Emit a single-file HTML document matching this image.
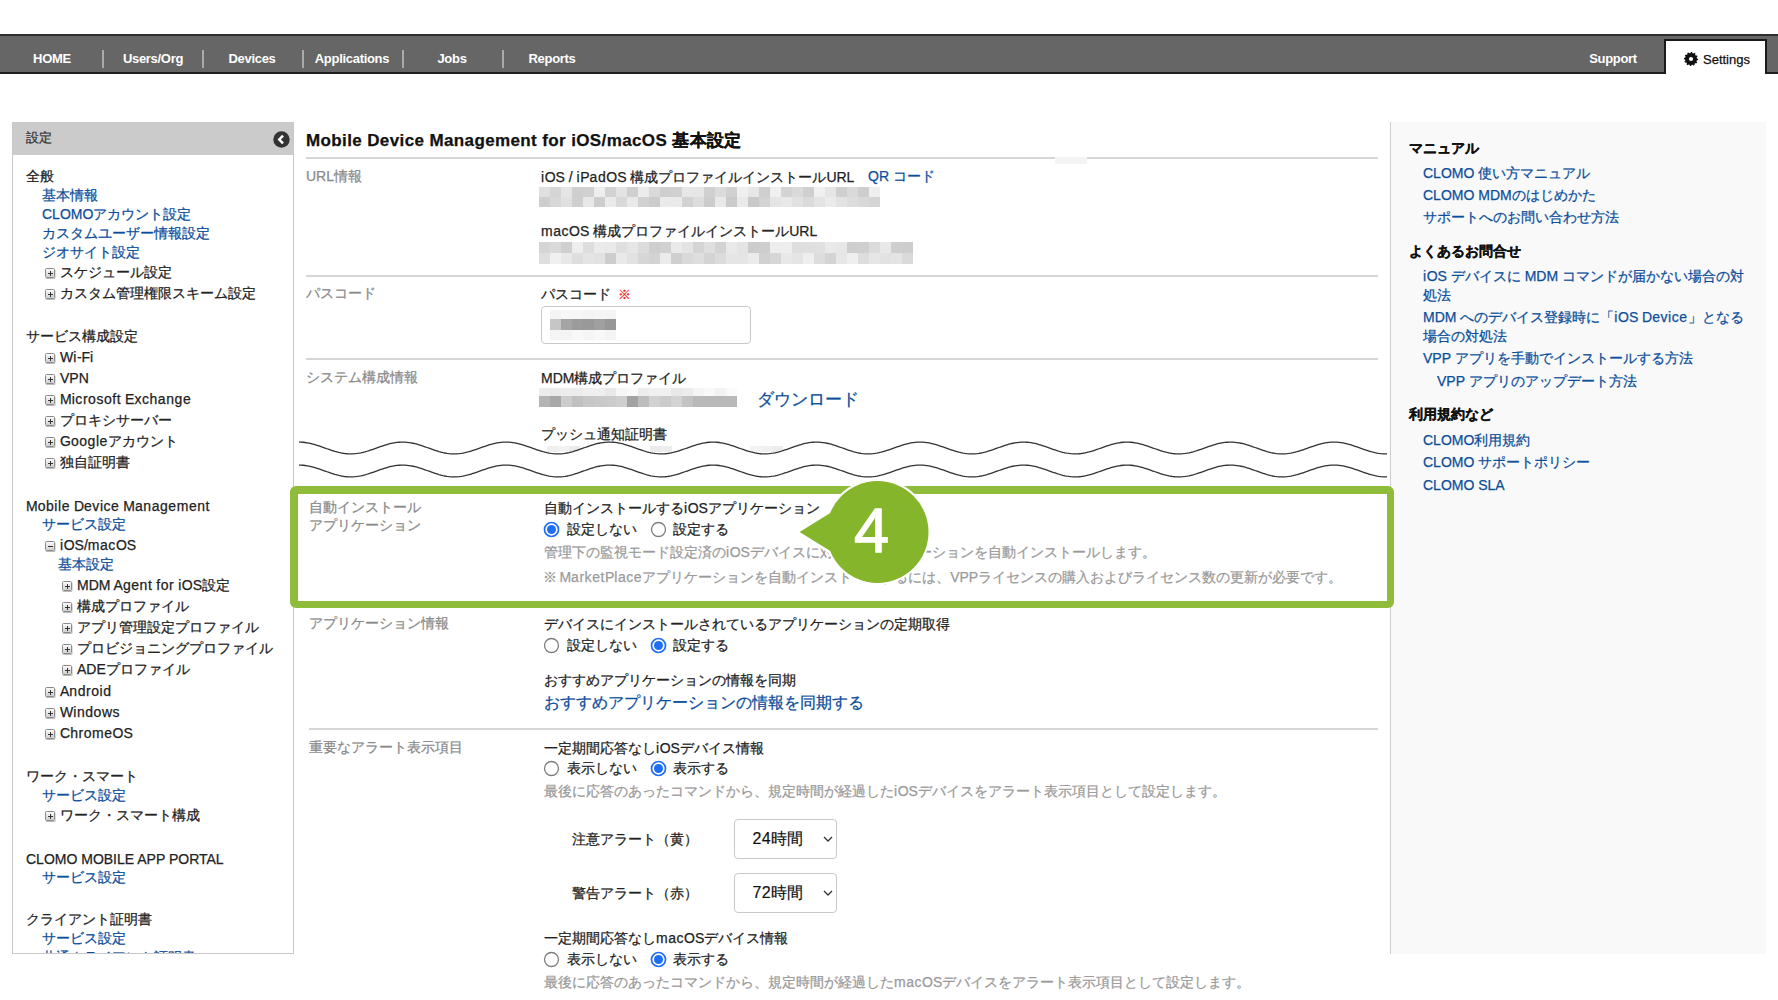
<!DOCTYPE html>
<html lang="ja"><head><meta charset="utf-8"><style>
*{margin:0;padding:0;box-sizing:border-box}
html,body{width:1778px;height:1000px;overflow:hidden;background:#fff}
body{position:relative;font-family:"Liberation Sans",sans-serif;font-size:14px;color:#222}
.t{position:absolute;white-space:nowrap;line-height:20px;height:20px;-webkit-text-stroke:0.25px currentColor}
.lk{color:#0b4e9b}
.lo{letter-spacing:0.55px}
.lb{color:#8a8a8a}
.gr{color:#9a9a9a}
.big{font-size:16.5px}
.bd{font-weight:bold;color:#111}
.ttl{font-size:17px;font-weight:bold;color:#111;letter-spacing:0.38px}
.req{color:#e8281e;font-size:13px;margin-left:3px}
.pl{display:inline-block;width:10px;height:10px;border:1px solid #8a8a8a;border-radius:1.5px;background:linear-gradient(#fafafa,#d0d0d0);box-shadow:0.5px 1px 0 #bbb;position:relative;margin-right:5px;vertical-align:-1px}
.pl:before{content:"";position:absolute;left:1.5px;top:3.5px;width:5px;height:1.2px;background:#333}
.pl:after{content:"";position:absolute;left:3.5px;top:1.5px;width:1.2px;height:5px;background:#333}
.pl.mi:after{display:none}
.nav{position:absolute;left:0;top:34px;width:1778px;height:40px;background:#666;border-top:2px solid #2e2e2e;border-bottom:2px solid #1e1e1e}
.nv{position:absolute;top:14.5px;width:100px;text-align:center;color:#fff;font-size:13px;font-weight:bold;line-height:16px;letter-spacing:-0.3px}
.sep{position:absolute;top:14px;width:2px;height:18px;background:#aaa}
.stab{position:absolute;left:1664px;top:39px;width:103px;height:35px;background:#fff;border:2px solid #1a1a1a;border-bottom:none}
.side{position:absolute;left:12px;top:122px;width:282px;height:832px;border:1px solid #c8c8c8;border-top:none;overflow:hidden;background:#fff}
.shd{position:absolute;left:0;top:0;width:100%;height:33px;background:#cbcbcb}
.sidein{position:absolute;left:-12px;top:-122px;width:1778px;height:1000px}
.rd{position:absolute}
.rd.on{border:1.8px solid #1f6ff5;background:#fff}
.rd.on:after{content:"";position:absolute;left:1.6px;top:1.6px;width:8.2px;height:8.2px;border-radius:50%;background:#1f6ff5}
.rl{position:absolute}
.bl{position:absolute;overflow:hidden}
.bl i{position:absolute}
.inp{position:absolute;border:1px solid #c9c9c9;border-radius:4px;background:#fff}
.sel{position:absolute;border:1px solid #c9c9c9;border-radius:4px;background:#fff}
.sel span{position:absolute;left:17.5px;top:10px;font-size:16px;line-height:18px;color:#111;letter-spacing:0.3px;-webkit-text-stroke:0.2px #111}
.rpan{position:absolute;left:1390px;top:122px;width:376px;height:832px;background:#f9f9f9;border-left:1px solid #cfcfcf}
.gbox{position:absolute;left:290px;top:486px;width:1104px;height:122px;border:solid #90bc3c;border-width:8px 7px 7px 8px;border-radius:6px}
</style></head><body>
<div class="nav"><div class="nv" style="left:2px">HOME</div><div class="nv" style="left:103px">Users/Org</div><div class="nv" style="left:202px">Devices</div><div class="nv" style="left:302px">Applications</div><div class="nv" style="left:402px">Jobs</div><div class="nv" style="left:502px">Reports</div><div class="sep" style="left:102px"></div><div class="sep" style="left:202px"></div><div class="sep" style="left:302px"></div><div class="sep" style="left:402px"></div><div class="sep" style="left:502px"></div><div class="nv" style="left:1563px">Support</div></div>
<div class="stab"></div>
<div style="position:absolute;left:1666px;top:72px;width:99px;height:3px;background:#fff"></div>
<svg style="position:absolute;left:1683px;top:51px" width="16" height="16" viewBox="0 0 16 16"><polygon points="15.10,8.00 15.04,8.93 13.70,9.53 13.45,10.26 14.15,11.55 13.63,12.32 12.17,12.17 11.59,12.68 11.55,14.15 10.72,14.56 9.53,13.70 8.77,13.85 8.00,15.10 7.07,15.04 6.47,13.70 5.74,13.45 4.45,14.15 3.68,13.63 3.83,12.17 3.32,11.59 1.85,11.55 1.44,10.72 2.30,9.53 2.15,8.77 0.90,8.00 0.96,7.07 2.30,6.47 2.55,5.74 1.85,4.45 2.37,3.68 3.83,3.83 4.41,3.32 4.45,1.85 5.28,1.44 6.47,2.30 7.23,2.15 8.00,0.90 8.93,0.96 9.53,2.30 10.26,2.55 11.55,1.85 12.32,2.37 12.17,3.83 12.68,4.41 14.15,4.45 14.56,5.28 13.70,6.47 13.85,7.23" fill="#111"/><circle cx="8" cy="8" r="2.1" fill="#fff"/></svg>
<div class="t" style="left:1703px;top:49.5px;font-size:13px;color:#111">Settings</div>
<div class="side"><div class="shd"></div><div class="sidein">
<div class="t" style="left:25px;top:128px;font-size:13px;color:#333">設定</div>
<svg style="position:absolute;left:272px;top:131px" width="17" height="17" viewBox="0 0 17 17"><circle cx="8.5" cy="8.5" r="8.2" fill="#333"/><path d="M10 4.6 L6.3 8.5 L10 12.4" fill="none" stroke="#fff" stroke-width="2.5"/></svg>
<div class="t " style="left:25px;top:166px">全般</div><div class="t lk" style="left:41px;top:185px">基本情報</div><div class="t lk" style="left:41px;top:204px">CLOMOアカウント設定</div><div class="t lk" style="left:41px;top:223px">カスタムユーザー情報設定</div><div class="t lk" style="left:41px;top:242px">ジオサイト設定</div><div class="t " style="left:44px;top:262px"><span class="pl"></span>スケジュール設定</div><div class="t " style="left:44px;top:283px"><span class="pl"></span>カスタム管理権限スキーム設定</div><div class="t " style="left:25px;top:326px">サービス構成設定</div><div class="t " style="left:44px;top:347px"><span class="pl"></span>W<span class="lo">i</span>-F<span class="lo">i</span></div><div class="t " style="left:44px;top:368px"><span class="pl"></span>VPN</div><div class="t " style="left:44px;top:389px"><span class="pl"></span>M<span class="lo">icrosoft</span> E<span class="lo">xchange</span></div><div class="t " style="left:44px;top:410px"><span class="pl"></span>プロキシサーバー</div><div class="t " style="left:44px;top:431px"><span class="pl"></span>G<span class="lo">oogle</span>アカウント</div><div class="t " style="left:44px;top:452px"><span class="pl"></span>独自証明書</div><div class="t " style="left:25px;top:496px">M<span class="lo">obile</span> D<span class="lo">evice</span> M<span class="lo">anagement</span></div><div class="t lk" style="left:41px;top:514px">サービス設定</div><div class="t " style="left:44px;top:535px"><span class="pl mi"></span><span class="lo">i</span>OS/<span class="lo">mac</span>OS</div><div class="t lk" style="left:57px;top:554px">基本設定</div><div class="t " style="left:61px;top:575px"><span class="pl"></span>MDM A<span class="lo">gent</span> <span class="lo">for</span> <span class="lo">i</span>OS設定</div><div class="t " style="left:61px;top:596px"><span class="pl"></span>構成プロファイル</div><div class="t " style="left:61px;top:617px"><span class="pl"></span>アプリ管理設定プロファイル</div><div class="t " style="left:61px;top:638px"><span class="pl"></span>プロビジョニングプロファイル</div><div class="t " style="left:61px;top:659px"><span class="pl"></span>ADEプロファイル</div><div class="t " style="left:44px;top:681px"><span class="pl"></span>A<span class="lo">ndroid</span></div><div class="t " style="left:44px;top:702px"><span class="pl"></span>W<span class="lo">indows</span></div><div class="t " style="left:44px;top:723px"><span class="pl"></span>C<span class="lo">hrome</span>OS</div><div class="t " style="left:25px;top:766px">ワーク・スマート</div><div class="t lk" style="left:41px;top:785px">サービス設定</div><div class="t " style="left:44px;top:805px"><span class="pl"></span>ワーク・スマート構成</div><div class="t " style="left:25px;top:849px">CLOMO MOBILE APP PORTAL</div><div class="t lk" style="left:41px;top:867px">サービス設定</div><div class="t " style="left:25px;top:909px">クライアント証明書</div><div class="t lk" style="left:41px;top:928px">サービス設定</div><div class="t lk" style="left:41px;top:947px">共通クライアント証明書</div>
</div></div>
<div class="rl" style="left:293px;top:122px;width:1px;height:832px;background:#c8c8c8"></div>
<div class="t ttl" style="left:306px;top:130.5px;">Mobile Device Management for iOS/macOS 基本設定</div><div class="t lb" style="left:306px;top:166px;">URL情報</div><div class="t " style="left:541px;top:167px;"><span class="lo">i</span>OS / <span class="lo">i</span>P<span class="lo">ad</span>OS 構成プロファイルインストールURL</div><div class="t lk" style="left:868px;top:166px;">QR コード</div><div class="t " style="left:541px;top:221px;"><span class="lo">mac</span>OS 構成プロファイルインストールURL</div><div class="t lb" style="left:306px;top:283px;">パスコード</div><div class="t " style="left:541px;top:284px;">パスコード <span class="req">※</span></div><div class="t lb" style="left:306px;top:367px;">システム構成情報</div><div class="t " style="left:541px;top:368px;">MDM構成プロファイル</div><div class="t lk big" style="left:757px;top:389px;">ダウンロード</div><div class="t " style="left:541px;top:424px;">プッシュ通知証明書</div><div class="t lb" style="left:309px;top:497px;">自動インストール</div><div class="t lb" style="left:309px;top:515px;">アプリケーション</div><div class="t " style="left:544px;top:498px;">自動インストールする<span class="lo">i</span>OSアプリケーション</div><div class="t " style="left:567px;top:519px;">設定しない</div><div class="t " style="left:673px;top:519px;">設定する</div><div class="t gr" style="left:544px;top:542px;">管理下の監視モード設定済の<span class="lo">i</span>OSデバイスに対し、アプリケーションを自動インストールします。</div><div class="t gr" style="left:542.5px;top:567px;">※<span style='letter-spacing:-1px'> </span>M<span class="lo">arket</span>P<span class="lo">lace</span>アプリケーションを自動インストールするには、VPPライセンスの購入およびライセンス数の更新が必要です。</div><div class="t lb" style="left:309px;top:613px;">アプリケーション情報</div><div class="t " style="left:544px;top:614px;">デバイスにインストールされているアプリケーションの定期取得</div><div class="t " style="left:567px;top:635px;">設定しない</div><div class="t " style="left:673px;top:635px;">設定する</div><div class="t " style="left:544px;top:670px;">おすすめアプリケーションの情報を同期</div><div class="t lk big" style="left:544px;top:692px;font-size:16.2px">おすすめアプリケーションの情報を同期する</div><div class="t lb" style="left:309px;top:737px;">重要なアラート表示項目</div><div class="t " style="left:544px;top:738px;">一定期間応答なし<span class="lo">i</span>OSデバイス情報</div><div class="t " style="left:567px;top:758px;">表示しない</div><div class="t " style="left:673px;top:758px;">表示する</div><div class="t gr" style="left:544px;top:781px;">最後に応答のあったコマンドから、規定時間が経過した<span class="lo">i</span>OSデバイスをアラート表示項目として設定します。</div><div class="t " style="left:572px;top:829px;">注意アラート（黄）</div><div class="t " style="left:572px;top:883px;">警告アラート（赤）</div><div class="t " style="left:544px;top:928px;">一定期間応答なし<span class="lo">mac</span>OSデバイス情報</div><div class="t " style="left:567px;top:949px;">表示しない</div><div class="t " style="left:673px;top:949px;">表示する</div><div class="t gr" style="left:544px;top:972px;">最後に応答のあったコマンドから、規定時間が経過した<span class="lo">mac</span>OSデバイスをアラート表示項目として設定します。</div><svg class="rd" style="left:542.5px;top:520.5px" width="17" height="17" viewBox="0 0 17 17"><circle cx="8.5" cy="8.5" r="7" fill="#fff" stroke="#1f6ff5" stroke-width="1.7"/><circle cx="8.5" cy="8.5" r="4.5" fill="#1f6ff5"/></svg><svg class="rd" style="left:649.5px;top:520.5px" width="17" height="17" viewBox="0 0 17 17"><circle cx="8.5" cy="8.5" r="7" fill="#fff" stroke="#7d7d7d" stroke-width="1.3"/></svg><svg class="rd" style="left:542.5px;top:636.5px" width="17" height="17" viewBox="0 0 17 17"><circle cx="8.5" cy="8.5" r="7" fill="#fff" stroke="#7d7d7d" stroke-width="1.3"/></svg><svg class="rd" style="left:649.5px;top:636.5px" width="17" height="17" viewBox="0 0 17 17"><circle cx="8.5" cy="8.5" r="7" fill="#fff" stroke="#1f6ff5" stroke-width="1.7"/><circle cx="8.5" cy="8.5" r="4.5" fill="#1f6ff5"/></svg><svg class="rd" style="left:542.5px;top:759.5px" width="17" height="17" viewBox="0 0 17 17"><circle cx="8.5" cy="8.5" r="7" fill="#fff" stroke="#7d7d7d" stroke-width="1.3"/></svg><svg class="rd" style="left:649.5px;top:759.5px" width="17" height="17" viewBox="0 0 17 17"><circle cx="8.5" cy="8.5" r="7" fill="#fff" stroke="#1f6ff5" stroke-width="1.7"/><circle cx="8.5" cy="8.5" r="4.5" fill="#1f6ff5"/></svg><svg class="rd" style="left:542.5px;top:950.5px" width="17" height="17" viewBox="0 0 17 17"><circle cx="8.5" cy="8.5" r="7" fill="#fff" stroke="#7d7d7d" stroke-width="1.3"/></svg><svg class="rd" style="left:649.5px;top:950.5px" width="17" height="17" viewBox="0 0 17 17"><circle cx="8.5" cy="8.5" r="7" fill="#fff" stroke="#1f6ff5" stroke-width="1.7"/><circle cx="8.5" cy="8.5" r="4.5" fill="#1f6ff5"/></svg><div class="rl" style="left:306px;top:157px;width:1072px;height:2px;background:#d6d6d6"></div><div class="rl" style="left:1055px;top:157px;width:32px;height:7px;background:#f4f4f4"></div><div class="rl" style="left:306px;top:275px;width:1072px;height:2px;background:#d6d6d6"></div><div class="rl" style="left:306px;top:358px;width:1072px;height:2px;background:#d6d6d6"></div><div class="rl" style="left:309px;top:728px;width:1069px;height:2px;background:#d6d6d6"></div><div class="bl" style="left:539px;top:187px;width:341px;height:20px"><i style="left:0px;top:0px;width:11px;height:10px;background:rgb(224,224,224)"></i><i style="left:11px;top:0px;width:11px;height:10px;background:rgb(213,213,213)"></i><i style="left:22px;top:0px;width:11px;height:10px;background:rgb(229,229,229)"></i><i style="left:33px;top:0px;width:11px;height:10px;background:rgb(207,207,207)"></i><i style="left:44px;top:0px;width:11px;height:10px;background:rgb(208,208,208)"></i><i style="left:55px;top:0px;width:11px;height:10px;background:rgb(238,238,238)"></i><i style="left:66px;top:0px;width:11px;height:10px;background:rgb(210,210,210)"></i><i style="left:77px;top:0px;width:11px;height:10px;background:rgb(227,227,227)"></i><i style="left:88px;top:0px;width:11px;height:10px;background:rgb(207,207,207)"></i><i style="left:99px;top:0px;width:11px;height:10px;background:rgb(236,236,236)"></i><i style="left:110px;top:0px;width:11px;height:10px;background:rgb(217,217,217)"></i><i style="left:121px;top:0px;width:11px;height:10px;background:rgb(206,206,206)"></i><i style="left:132px;top:0px;width:11px;height:10px;background:rgb(209,209,209)"></i><i style="left:143px;top:0px;width:11px;height:10px;background:rgb(231,231,231)"></i><i style="left:154px;top:0px;width:11px;height:10px;background:rgb(230,230,230)"></i><i style="left:165px;top:0px;width:11px;height:10px;background:rgb(208,208,208)"></i><i style="left:176px;top:0px;width:11px;height:10px;background:rgb(219,219,219)"></i><i style="left:187px;top:0px;width:11px;height:10px;background:rgb(209,209,209)"></i><i style="left:198px;top:0px;width:11px;height:10px;background:rgb(239,239,239)"></i><i style="left:209px;top:0px;width:11px;height:10px;background:rgb(231,231,231)"></i><i style="left:220px;top:0px;width:11px;height:10px;background:rgb(207,207,207)"></i><i style="left:231px;top:0px;width:11px;height:10px;background:rgb(240,240,240)"></i><i style="left:242px;top:0px;width:11px;height:10px;background:rgb(211,211,211)"></i><i style="left:253px;top:0px;width:11px;height:10px;background:rgb(218,218,218)"></i><i style="left:264px;top:0px;width:11px;height:10px;background:rgb(207,207,207)"></i><i style="left:275px;top:0px;width:11px;height:10px;background:rgb(240,240,240)"></i><i style="left:286px;top:0px;width:11px;height:10px;background:rgb(229,229,229)"></i><i style="left:297px;top:0px;width:11px;height:10px;background:rgb(207,207,207)"></i><i style="left:308px;top:0px;width:11px;height:10px;background:rgb(218,218,218)"></i><i style="left:319px;top:0px;width:11px;height:10px;background:rgb(206,206,206)"></i><i style="left:330px;top:0px;width:11px;height:10px;background:rgb(239,239,239)"></i><i style="left:0px;top:10px;width:11px;height:10px;background:rgb(206,206,206)"></i><i style="left:11px;top:10px;width:11px;height:10px;background:rgb(216,216,216)"></i><i style="left:22px;top:10px;width:11px;height:10px;background:rgb(224,224,224)"></i><i style="left:33px;top:10px;width:11px;height:10px;background:rgb(207,207,207)"></i><i style="left:44px;top:10px;width:11px;height:10px;background:rgb(232,232,232)"></i><i style="left:55px;top:10px;width:11px;height:10px;background:rgb(205,205,205)"></i><i style="left:66px;top:10px;width:11px;height:10px;background:rgb(234,234,234)"></i><i style="left:77px;top:10px;width:11px;height:10px;background:rgb(217,217,217)"></i><i style="left:88px;top:10px;width:11px;height:10px;background:rgb(233,233,233)"></i><i style="left:99px;top:10px;width:11px;height:10px;background:rgb(209,209,209)"></i><i style="left:110px;top:10px;width:11px;height:10px;background:rgb(204,204,204)"></i><i style="left:121px;top:10px;width:11px;height:10px;background:rgb(235,235,235)"></i><i style="left:132px;top:10px;width:11px;height:10px;background:rgb(234,234,234)"></i><i style="left:143px;top:10px;width:11px;height:10px;background:rgb(210,210,210)"></i><i style="left:154px;top:10px;width:11px;height:10px;background:rgb(221,221,221)"></i><i style="left:165px;top:10px;width:11px;height:10px;background:rgb(204,204,204)"></i><i style="left:176px;top:10px;width:11px;height:10px;background:rgb(233,233,233)"></i><i style="left:187px;top:10px;width:11px;height:10px;background:rgb(202,202,202)"></i><i style="left:198px;top:10px;width:11px;height:10px;background:rgb(234,234,234)"></i><i style="left:209px;top:10px;width:11px;height:10px;background:rgb(201,201,201)"></i><i style="left:220px;top:10px;width:11px;height:10px;background:rgb(211,211,211)"></i><i style="left:231px;top:10px;width:11px;height:10px;background:rgb(229,229,229)"></i><i style="left:242px;top:10px;width:11px;height:10px;background:rgb(232,232,232)"></i><i style="left:253px;top:10px;width:11px;height:10px;background:rgb(225,225,225)"></i><i style="left:264px;top:10px;width:11px;height:10px;background:rgb(218,218,218)"></i><i style="left:275px;top:10px;width:11px;height:10px;background:rgb(227,227,227)"></i><i style="left:286px;top:10px;width:11px;height:10px;background:rgb(235,235,235)"></i><i style="left:297px;top:10px;width:11px;height:10px;background:rgb(227,227,227)"></i><i style="left:308px;top:10px;width:11px;height:10px;background:rgb(221,221,221)"></i><i style="left:319px;top:10px;width:11px;height:10px;background:rgb(217,217,217)"></i><i style="left:330px;top:10px;width:11px;height:10px;background:rgb(213,213,213)"></i></div><div class="bl" style="left:539px;top:242px;width:374px;height:22px"><i style="left:0px;top:0px;width:11px;height:11px;background:rgb(213,213,213)"></i><i style="left:11px;top:0px;width:11px;height:11px;background:rgb(217,217,217)"></i><i style="left:22px;top:0px;width:11px;height:11px;background:rgb(207,207,207)"></i><i style="left:33px;top:0px;width:11px;height:11px;background:rgb(238,238,238)"></i><i style="left:44px;top:0px;width:11px;height:11px;background:rgb(221,221,221)"></i><i style="left:55px;top:0px;width:11px;height:11px;background:rgb(235,235,235)"></i><i style="left:66px;top:0px;width:11px;height:11px;background:rgb(233,233,233)"></i><i style="left:77px;top:0px;width:11px;height:11px;background:rgb(223,223,223)"></i><i style="left:88px;top:0px;width:11px;height:11px;background:rgb(230,230,230)"></i><i style="left:99px;top:0px;width:11px;height:11px;background:rgb(220,220,220)"></i><i style="left:110px;top:0px;width:11px;height:11px;background:rgb(206,206,206)"></i><i style="left:121px;top:0px;width:11px;height:11px;background:rgb(209,209,209)"></i><i style="left:132px;top:0px;width:11px;height:11px;background:rgb(234,234,234)"></i><i style="left:143px;top:0px;width:11px;height:11px;background:rgb(228,228,228)"></i><i style="left:154px;top:0px;width:11px;height:11px;background:rgb(212,212,212)"></i><i style="left:165px;top:0px;width:11px;height:11px;background:rgb(223,223,223)"></i><i style="left:176px;top:0px;width:11px;height:11px;background:rgb(211,211,211)"></i><i style="left:187px;top:0px;width:11px;height:11px;background:rgb(233,233,233)"></i><i style="left:198px;top:0px;width:11px;height:11px;background:rgb(228,228,228)"></i><i style="left:209px;top:0px;width:11px;height:11px;background:rgb(204,204,204)"></i><i style="left:220px;top:0px;width:11px;height:11px;background:rgb(206,206,206)"></i><i style="left:231px;top:0px;width:11px;height:11px;background:rgb(237,237,237)"></i><i style="left:242px;top:0px;width:11px;height:11px;background:rgb(238,238,238)"></i><i style="left:253px;top:0px;width:11px;height:11px;background:rgb(222,222,222)"></i><i style="left:264px;top:0px;width:11px;height:11px;background:rgb(223,223,223)"></i><i style="left:275px;top:0px;width:11px;height:11px;background:rgb(224,224,224)"></i><i style="left:286px;top:0px;width:11px;height:11px;background:rgb(233,233,233)"></i><i style="left:297px;top:0px;width:11px;height:11px;background:rgb(231,231,231)"></i><i style="left:308px;top:0px;width:11px;height:11px;background:rgb(206,206,206)"></i><i style="left:319px;top:0px;width:11px;height:11px;background:rgb(207,207,207)"></i><i style="left:330px;top:0px;width:11px;height:11px;background:rgb(219,219,219)"></i><i style="left:341px;top:0px;width:11px;height:11px;background:rgb(232,232,232)"></i><i style="left:352px;top:0px;width:11px;height:11px;background:rgb(206,206,206)"></i><i style="left:363px;top:0px;width:11px;height:11px;background:rgb(205,205,205)"></i><i style="left:0px;top:11px;width:11px;height:11px;background:rgb(223,223,223)"></i><i style="left:11px;top:11px;width:11px;height:11px;background:rgb(240,240,240)"></i><i style="left:22px;top:11px;width:11px;height:11px;background:rgb(232,232,232)"></i><i style="left:33px;top:11px;width:11px;height:11px;background:rgb(222,222,222)"></i><i style="left:44px;top:11px;width:11px;height:11px;background:rgb(228,228,228)"></i><i style="left:55px;top:11px;width:11px;height:11px;background:rgb(226,226,226)"></i><i style="left:66px;top:11px;width:11px;height:11px;background:rgb(205,205,205)"></i><i style="left:77px;top:11px;width:11px;height:11px;background:rgb(233,233,233)"></i><i style="left:88px;top:11px;width:11px;height:11px;background:rgb(226,226,226)"></i><i style="left:99px;top:11px;width:11px;height:11px;background:rgb(214,214,214)"></i><i style="left:110px;top:11px;width:11px;height:11px;background:rgb(211,211,211)"></i><i style="left:121px;top:11px;width:11px;height:11px;background:rgb(235,235,235)"></i><i style="left:132px;top:11px;width:11px;height:11px;background:rgb(207,207,207)"></i><i style="left:143px;top:11px;width:11px;height:11px;background:rgb(217,217,217)"></i><i style="left:154px;top:11px;width:11px;height:11px;background:rgb(222,222,222)"></i><i style="left:165px;top:11px;width:11px;height:11px;background:rgb(212,212,212)"></i><i style="left:176px;top:11px;width:11px;height:11px;background:rgb(219,219,219)"></i><i style="left:187px;top:11px;width:11px;height:11px;background:rgb(229,229,229)"></i><i style="left:198px;top:11px;width:11px;height:11px;background:rgb(229,229,229)"></i><i style="left:209px;top:11px;width:11px;height:11px;background:rgb(235,235,235)"></i><i style="left:220px;top:11px;width:11px;height:11px;background:rgb(209,209,209)"></i><i style="left:231px;top:11px;width:11px;height:11px;background:rgb(214,214,214)"></i><i style="left:242px;top:11px;width:11px;height:11px;background:rgb(232,232,232)"></i><i style="left:253px;top:11px;width:11px;height:11px;background:rgb(229,229,229)"></i><i style="left:264px;top:11px;width:11px;height:11px;background:rgb(239,239,239)"></i><i style="left:275px;top:11px;width:11px;height:11px;background:rgb(221,221,221)"></i><i style="left:286px;top:11px;width:11px;height:11px;background:rgb(212,212,212)"></i><i style="left:297px;top:11px;width:11px;height:11px;background:rgb(231,231,231)"></i><i style="left:308px;top:11px;width:11px;height:11px;background:rgb(239,239,239)"></i><i style="left:319px;top:11px;width:11px;height:11px;background:rgb(221,221,221)"></i><i style="left:330px;top:11px;width:11px;height:11px;background:rgb(230,230,230)"></i><i style="left:341px;top:11px;width:11px;height:11px;background:rgb(226,226,226)"></i><i style="left:352px;top:11px;width:11px;height:11px;background:rgb(228,228,228)"></i><i style="left:363px;top:11px;width:11px;height:11px;background:rgb(218,218,218)"></i></div><div class="bl" style="left:539px;top:388px;width:198px;height:19px"><i style="left:0px;top:0px;width:11px;height:8px;background:rgb(236,236,236)"></i><i style="left:11px;top:0px;width:11px;height:8px;background:rgb(234,234,234)"></i><i style="left:22px;top:0px;width:11px;height:8px;background:rgb(237,237,237)"></i><i style="left:33px;top:0px;width:11px;height:8px;background:rgb(236,236,236)"></i><i style="left:44px;top:0px;width:11px;height:8px;background:rgb(239,239,239)"></i><i style="left:55px;top:0px;width:11px;height:8px;background:rgb(239,239,239)"></i><i style="left:66px;top:0px;width:11px;height:8px;background:rgb(232,232,232)"></i><i style="left:77px;top:0px;width:11px;height:8px;background:rgb(247,247,247)"></i><i style="left:88px;top:0px;width:11px;height:8px;background:rgb(250,250,250)"></i><i style="left:99px;top:0px;width:11px;height:8px;background:rgb(237,237,237)"></i><i style="left:110px;top:0px;width:11px;height:8px;background:rgb(240,240,240)"></i><i style="left:121px;top:0px;width:11px;height:8px;background:rgb(241,241,241)"></i><i style="left:132px;top:0px;width:11px;height:8px;background:rgb(232,232,232)"></i><i style="left:143px;top:0px;width:11px;height:8px;background:rgb(236,236,236)"></i><i style="left:154px;top:0px;width:11px;height:8px;background:rgb(245,245,245)"></i><i style="left:165px;top:0px;width:11px;height:8px;background:rgb(249,249,249)"></i><i style="left:176px;top:0px;width:11px;height:8px;background:rgb(243,243,243)"></i><i style="left:187px;top:0px;width:11px;height:8px;background:rgb(250,250,250)"></i><i style="left:0px;top:8px;width:11px;height:11px;background:rgb(180,180,180)"></i><i style="left:11px;top:8px;width:11px;height:11px;background:rgb(168,168,168)"></i><i style="left:22px;top:8px;width:11px;height:11px;background:rgb(204,204,204)"></i><i style="left:33px;top:8px;width:11px;height:11px;background:rgb(192,192,192)"></i><i style="left:44px;top:8px;width:11px;height:11px;background:rgb(199,199,199)"></i><i style="left:55px;top:8px;width:11px;height:11px;background:rgb(201,201,201)"></i><i style="left:66px;top:8px;width:11px;height:11px;background:rgb(203,203,203)"></i><i style="left:77px;top:8px;width:11px;height:11px;background:rgb(207,207,207)"></i><i style="left:88px;top:8px;width:11px;height:11px;background:rgb(163,163,163)"></i><i style="left:99px;top:8px;width:11px;height:11px;background:rgb(189,189,189)"></i><i style="left:110px;top:8px;width:11px;height:11px;background:rgb(209,209,209)"></i><i style="left:121px;top:8px;width:11px;height:11px;background:rgb(203,203,203)"></i><i style="left:132px;top:8px;width:11px;height:11px;background:rgb(211,211,211)"></i><i style="left:143px;top:8px;width:11px;height:11px;background:rgb(195,195,195)"></i><i style="left:154px;top:8px;width:11px;height:11px;background:rgb(185,185,185)"></i><i style="left:165px;top:8px;width:11px;height:11px;background:rgb(185,185,185)"></i><i style="left:176px;top:8px;width:11px;height:11px;background:rgb(185,185,185)"></i><i style="left:187px;top:8px;width:11px;height:11px;background:rgb(185,185,185)"></i></div><div class="inp" style="left:541px;top:306px;width:210px;height:38px"></div><div class="bl" style="left:550px;top:310px;width:66px;height:30px"><i style="left:0px;top:0px;width:11px;height:9px;background:rgb(244,244,244)"></i><i style="left:11px;top:0px;width:11px;height:9px;background:rgb(247,247,247)"></i><i style="left:22px;top:0px;width:11px;height:9px;background:rgb(247,247,247)"></i><i style="left:33px;top:0px;width:11px;height:9px;background:rgb(244,244,244)"></i><i style="left:44px;top:0px;width:11px;height:9px;background:rgb(245,245,245)"></i><i style="left:55px;top:0px;width:11px;height:9px;background:rgb(244,244,244)"></i><i style="left:0px;top:9px;width:11px;height:11px;background:rgb(156,156,156)"></i><i style="left:11px;top:9px;width:11px;height:11px;background:rgb(164,164,164)"></i><i style="left:22px;top:9px;width:11px;height:11px;background:rgb(155,155,155)"></i><i style="left:33px;top:9px;width:11px;height:11px;background:rgb(153,153,153)"></i><i style="left:44px;top:9px;width:11px;height:11px;background:rgb(160,160,160)"></i><i style="left:55px;top:9px;width:11px;height:11px;background:rgb(151,151,151)"></i><i style="left:0px;top:20px;width:11px;height:10px;background:rgb(244,244,244)"></i><i style="left:11px;top:20px;width:11px;height:10px;background:rgb(244,244,244)"></i><i style="left:22px;top:20px;width:11px;height:10px;background:rgb(248,248,248)"></i><i style="left:33px;top:20px;width:11px;height:10px;background:rgb(245,245,245)"></i><i style="left:44px;top:20px;width:11px;height:10px;background:rgb(248,248,248)"></i><i style="left:55px;top:20px;width:11px;height:10px;background:rgb(244,244,244)"></i></div><div class="rl" style="left:550px;top:319px;width:11px;height:11px;background:#c6c6c6"></div><div class="bl" style="left:547px;top:446px;width:33px;height:6px"><i style="left:0px;top:0px;width:11px;height:6px;background:rgb(239,239,239)"></i><i style="left:11px;top:0px;width:11px;height:6px;background:rgb(243,243,243)"></i><i style="left:22px;top:0px;width:11px;height:6px;background:rgb(234,234,234)"></i></div><div class="bl" style="left:650px;top:446px;width:22px;height:6px"><i style="left:0px;top:0px;width:11px;height:6px;background:rgb(235,235,235)"></i><i style="left:11px;top:0px;width:11px;height:6px;background:rgb(237,237,237)"></i></div><div class="bl" style="left:750px;top:446px;width:33px;height:6px"><i style="left:0px;top:0px;width:11px;height:6px;background:rgb(243,243,243)"></i><i style="left:11px;top:0px;width:11px;height:6px;background:rgb(240,240,240)"></i><i style="left:22px;top:0px;width:11px;height:6px;background:rgb(236,236,236)"></i></div><div class="sel" style="left:734px;top:819px;width:103px;height:40px"><span>24時間</span><svg width="10" height="6" viewBox="0 0 10 6" style="position:absolute;left:88px;top:16px"><path d="M1 1 L5 5 L9 1" fill="none" stroke="#333" stroke-width="1.3"/></svg></div><div class="sel" style="left:734px;top:873px;width:103px;height:40px"><span>72時間</span><svg width="10" height="6" viewBox="0 0 10 6" style="position:absolute;left:88px;top:16px"><path d="M1 1 L5 5 L9 1" fill="none" stroke="#333" stroke-width="1.3"/></svg></div>
<svg style="position:absolute;left:290px;top:425px" width="1110" height="70" viewBox="290 425 1110 70">
<polygon points="299.0,442.10 301.0,442.14 303.0,442.27 305.0,442.49 307.0,442.78 309.0,443.15 311.0,443.60 313.0,444.11 315.0,444.67 317.0,445.29 319.0,445.94 321.0,446.62 323.0,447.33 325.0,448.04 327.0,448.76 329.0,449.46 331.0,450.14 333.0,450.79 335.0,451.40 337.0,451.96 339.0,452.46 341.0,452.90 343.0,453.26 345.0,453.54 347.0,453.75 349.0,453.87 351.0,453.90 353.0,453.85 355.0,453.70 357.0,453.48 359.0,453.18 361.0,452.79 363.0,452.34 365.0,451.83 367.0,451.25 369.0,450.63 371.0,449.98 373.0,449.29 375.0,448.58 377.0,447.87 379.0,447.15 381.0,446.45 383.0,445.77 385.0,445.13 387.0,444.52 389.0,443.97 391.0,443.48 393.0,443.05 395.0,442.70 397.0,442.43 399.0,442.23 401.0,442.12 403.0,442.10 405.0,442.17 407.0,442.32 409.0,442.55 411.0,442.87 413.0,443.26 415.0,443.72 417.0,444.24 419.0,444.82 421.0,445.45 423.0,446.11 425.0,446.80 427.0,447.51 429.0,448.22 431.0,448.94 433.0,449.63 435.0,450.31 437.0,450.95 439.0,451.55 441.0,452.09 443.0,452.58 445.0,452.99 447.0,453.34 449.0,453.60 451.0,453.79 453.0,453.88 455.0,453.89 457.0,453.82 459.0,453.66 461.0,453.41 463.0,453.09 465.0,452.69 467.0,452.22 469.0,451.69 471.0,451.10 473.0,450.47 475.0,449.81 477.0,449.11 479.0,448.40 481.0,447.69 483.0,446.98 485.0,446.28 487.0,445.61 489.0,444.97 491.0,444.38 493.0,443.84 495.0,443.37 497.0,442.96 499.0,442.62 501.0,442.37 503.0,442.20 505.0,442.11 507.0,442.11 509.0,442.20 511.0,442.37 513.0,442.62 515.0,442.96 517.0,443.37 519.0,443.84 521.0,444.38 523.0,444.97 525.0,445.61 527.0,446.28 529.0,446.98 531.0,447.69 533.0,448.40 535.0,449.11 537.0,449.81 539.0,450.47 541.0,451.10 543.0,451.69 545.0,452.22 547.0,452.69 549.0,453.09 551.0,453.41 553.0,453.66 555.0,453.82 557.0,453.89 559.0,453.88 561.0,453.79 563.0,453.60 565.0,453.34 567.0,452.99 569.0,452.58 571.0,452.09 573.0,451.55 575.0,450.95 577.0,450.31 579.0,449.63 581.0,448.94 583.0,448.22 585.0,447.51 587.0,446.80 589.0,446.11 591.0,445.45 593.0,444.82 595.0,444.24 597.0,443.72 599.0,443.26 601.0,442.87 603.0,442.55 605.0,442.32 607.0,442.17 609.0,442.10 611.0,442.12 613.0,442.23 615.0,442.43 617.0,442.70 619.0,443.05 621.0,443.48 623.0,443.97 625.0,444.52 627.0,445.13 629.0,445.77 631.0,446.45 633.0,447.15 635.0,447.87 637.0,448.58 639.0,449.29 641.0,449.98 643.0,450.63 645.0,451.25 647.0,451.83 649.0,452.34 651.0,452.79 653.0,453.18 655.0,453.48 657.0,453.70 659.0,453.85 661.0,453.90 663.0,453.87 665.0,453.75 667.0,453.54 669.0,453.26 671.0,452.90 673.0,452.46 675.0,451.96 677.0,451.40 679.0,450.79 681.0,450.14 683.0,449.46 685.0,448.76 687.0,448.04 689.0,447.33 691.0,446.62 693.0,445.94 695.0,445.29 697.0,444.67 699.0,444.11 701.0,443.60 703.0,443.15 705.0,442.78 707.0,442.49 709.0,442.27 711.0,442.14 713.0,442.10 715.0,442.14 717.0,442.27 719.0,442.49 721.0,442.78 723.0,443.15 725.0,443.60 727.0,444.11 729.0,444.67 731.0,445.29 733.0,445.94 735.0,446.62 737.0,447.33 739.0,448.04 741.0,448.76 743.0,449.46 745.0,450.14 747.0,450.79 749.0,451.40 751.0,451.96 753.0,452.46 755.0,452.90 757.0,453.26 759.0,453.54 761.0,453.75 763.0,453.87 765.0,453.90 767.0,453.85 769.0,453.70 771.0,453.48 773.0,453.18 775.0,452.79 777.0,452.34 779.0,451.83 781.0,451.25 783.0,450.63 785.0,449.98 787.0,449.29 789.0,448.58 791.0,447.87 793.0,447.15 795.0,446.45 797.0,445.77 799.0,445.13 801.0,444.52 803.0,443.97 805.0,443.48 807.0,443.05 809.0,442.70 811.0,442.43 813.0,442.23 815.0,442.12 817.0,442.10 819.0,442.17 821.0,442.32 823.0,442.55 825.0,442.87 827.0,443.26 829.0,443.72 831.0,444.24 833.0,444.82 835.0,445.45 837.0,446.11 839.0,446.80 841.0,447.51 843.0,448.22 845.0,448.94 847.0,449.63 849.0,450.31 851.0,450.95 853.0,451.55 855.0,452.09 857.0,452.58 859.0,452.99 861.0,453.34 863.0,453.60 865.0,453.79 867.0,453.88 869.0,453.89 871.0,453.82 873.0,453.66 875.0,453.41 877.0,453.09 879.0,452.69 881.0,452.22 883.0,451.69 885.0,451.10 887.0,450.47 889.0,449.81 891.0,449.11 893.0,448.40 895.0,447.69 897.0,446.98 899.0,446.28 901.0,445.61 903.0,444.97 905.0,444.38 907.0,443.84 909.0,443.37 911.0,442.96 913.0,442.62 915.0,442.37 917.0,442.20 919.0,442.11 921.0,442.11 923.0,442.20 925.0,442.37 927.0,442.62 929.0,442.96 931.0,443.37 933.0,443.84 935.0,444.38 937.0,444.97 939.0,445.61 941.0,446.28 943.0,446.98 945.0,447.69 947.0,448.40 949.0,449.11 951.0,449.81 953.0,450.47 955.0,451.10 957.0,451.69 959.0,452.22 961.0,452.69 963.0,453.09 965.0,453.41 967.0,453.66 969.0,453.82 971.0,453.89 973.0,453.88 975.0,453.79 977.0,453.60 979.0,453.34 981.0,452.99 983.0,452.58 985.0,452.09 987.0,451.55 989.0,450.95 991.0,450.31 993.0,449.63 995.0,448.94 997.0,448.22 999.0,447.51 1001.0,446.80 1003.0,446.11 1005.0,445.45 1007.0,444.82 1009.0,444.24 1011.0,443.72 1013.0,443.26 1015.0,442.87 1017.0,442.55 1019.0,442.32 1021.0,442.17 1023.0,442.10 1025.0,442.12 1027.0,442.23 1029.0,442.43 1031.0,442.70 1033.0,443.05 1035.0,443.48 1037.0,443.97 1039.0,444.52 1041.0,445.13 1043.0,445.77 1045.0,446.45 1047.0,447.15 1049.0,447.87 1051.0,448.58 1053.0,449.29 1055.0,449.98 1057.0,450.63 1059.0,451.25 1061.0,451.83 1063.0,452.34 1065.0,452.79 1067.0,453.18 1069.0,453.48 1071.0,453.70 1073.0,453.85 1075.0,453.90 1077.0,453.87 1079.0,453.75 1081.0,453.54 1083.0,453.26 1085.0,452.90 1087.0,452.46 1089.0,451.96 1091.0,451.40 1093.0,450.79 1095.0,450.14 1097.0,449.46 1099.0,448.76 1101.0,448.04 1103.0,447.33 1105.0,446.62 1107.0,445.94 1109.0,445.29 1111.0,444.67 1113.0,444.11 1115.0,443.60 1117.0,443.15 1119.0,442.78 1121.0,442.49 1123.0,442.27 1125.0,442.14 1127.0,442.10 1129.0,442.14 1131.0,442.27 1133.0,442.49 1135.0,442.78 1137.0,443.15 1139.0,443.60 1141.0,444.11 1143.0,444.67 1145.0,445.29 1147.0,445.94 1149.0,446.62 1151.0,447.33 1153.0,448.04 1155.0,448.76 1157.0,449.46 1159.0,450.14 1161.0,450.79 1163.0,451.40 1165.0,451.96 1167.0,452.46 1169.0,452.90 1171.0,453.26 1173.0,453.54 1175.0,453.75 1177.0,453.87 1179.0,453.90 1181.0,453.85 1183.0,453.70 1185.0,453.48 1187.0,453.18 1189.0,452.79 1191.0,452.34 1193.0,451.83 1195.0,451.25 1197.0,450.63 1199.0,449.98 1201.0,449.29 1203.0,448.58 1205.0,447.87 1207.0,447.15 1209.0,446.45 1211.0,445.77 1213.0,445.13 1215.0,444.52 1217.0,443.97 1219.0,443.48 1221.0,443.05 1223.0,442.70 1225.0,442.43 1227.0,442.23 1229.0,442.12 1231.0,442.10 1233.0,442.17 1235.0,442.32 1237.0,442.55 1239.0,442.87 1241.0,443.26 1243.0,443.72 1245.0,444.24 1247.0,444.82 1249.0,445.45 1251.0,446.11 1253.0,446.80 1255.0,447.51 1257.0,448.22 1259.0,448.94 1261.0,449.63 1263.0,450.31 1265.0,450.95 1267.0,451.55 1269.0,452.09 1271.0,452.58 1273.0,452.99 1275.0,453.34 1277.0,453.60 1279.0,453.79 1281.0,453.88 1283.0,453.89 1285.0,453.82 1287.0,453.66 1289.0,453.41 1291.0,453.09 1293.0,452.69 1295.0,452.22 1297.0,451.69 1299.0,451.10 1301.0,450.47 1303.0,449.81 1305.0,449.11 1307.0,448.40 1309.0,447.69 1311.0,446.98 1313.0,446.28 1315.0,445.61 1317.0,444.97 1319.0,444.38 1321.0,443.84 1323.0,443.37 1325.0,442.96 1327.0,442.62 1329.0,442.37 1331.0,442.20 1333.0,442.11 1335.0,442.11 1337.0,442.20 1339.0,442.37 1341.0,442.62 1343.0,442.96 1345.0,443.37 1347.0,443.84 1349.0,444.38 1351.0,444.97 1353.0,445.61 1355.0,446.28 1357.0,446.98 1359.0,447.69 1361.0,448.40 1363.0,449.11 1365.0,449.81 1367.0,450.47 1369.0,451.10 1371.0,451.69 1373.0,452.22 1375.0,452.69 1377.0,453.09 1379.0,453.41 1381.0,453.66 1383.0,453.82 1385.0,453.89 1387.0,453.88 1387,486 299,486" fill="#fff"/>
<polyline points="299.0,442.10 301.0,442.14 303.0,442.27 305.0,442.49 307.0,442.78 309.0,443.15 311.0,443.60 313.0,444.11 315.0,444.67 317.0,445.29 319.0,445.94 321.0,446.62 323.0,447.33 325.0,448.04 327.0,448.76 329.0,449.46 331.0,450.14 333.0,450.79 335.0,451.40 337.0,451.96 339.0,452.46 341.0,452.90 343.0,453.26 345.0,453.54 347.0,453.75 349.0,453.87 351.0,453.90 353.0,453.85 355.0,453.70 357.0,453.48 359.0,453.18 361.0,452.79 363.0,452.34 365.0,451.83 367.0,451.25 369.0,450.63 371.0,449.98 373.0,449.29 375.0,448.58 377.0,447.87 379.0,447.15 381.0,446.45 383.0,445.77 385.0,445.13 387.0,444.52 389.0,443.97 391.0,443.48 393.0,443.05 395.0,442.70 397.0,442.43 399.0,442.23 401.0,442.12 403.0,442.10 405.0,442.17 407.0,442.32 409.0,442.55 411.0,442.87 413.0,443.26 415.0,443.72 417.0,444.24 419.0,444.82 421.0,445.45 423.0,446.11 425.0,446.80 427.0,447.51 429.0,448.22 431.0,448.94 433.0,449.63 435.0,450.31 437.0,450.95 439.0,451.55 441.0,452.09 443.0,452.58 445.0,452.99 447.0,453.34 449.0,453.60 451.0,453.79 453.0,453.88 455.0,453.89 457.0,453.82 459.0,453.66 461.0,453.41 463.0,453.09 465.0,452.69 467.0,452.22 469.0,451.69 471.0,451.10 473.0,450.47 475.0,449.81 477.0,449.11 479.0,448.40 481.0,447.69 483.0,446.98 485.0,446.28 487.0,445.61 489.0,444.97 491.0,444.38 493.0,443.84 495.0,443.37 497.0,442.96 499.0,442.62 501.0,442.37 503.0,442.20 505.0,442.11 507.0,442.11 509.0,442.20 511.0,442.37 513.0,442.62 515.0,442.96 517.0,443.37 519.0,443.84 521.0,444.38 523.0,444.97 525.0,445.61 527.0,446.28 529.0,446.98 531.0,447.69 533.0,448.40 535.0,449.11 537.0,449.81 539.0,450.47 541.0,451.10 543.0,451.69 545.0,452.22 547.0,452.69 549.0,453.09 551.0,453.41 553.0,453.66 555.0,453.82 557.0,453.89 559.0,453.88 561.0,453.79 563.0,453.60 565.0,453.34 567.0,452.99 569.0,452.58 571.0,452.09 573.0,451.55 575.0,450.95 577.0,450.31 579.0,449.63 581.0,448.94 583.0,448.22 585.0,447.51 587.0,446.80 589.0,446.11 591.0,445.45 593.0,444.82 595.0,444.24 597.0,443.72 599.0,443.26 601.0,442.87 603.0,442.55 605.0,442.32 607.0,442.17 609.0,442.10 611.0,442.12 613.0,442.23 615.0,442.43 617.0,442.70 619.0,443.05 621.0,443.48 623.0,443.97 625.0,444.52 627.0,445.13 629.0,445.77 631.0,446.45 633.0,447.15 635.0,447.87 637.0,448.58 639.0,449.29 641.0,449.98 643.0,450.63 645.0,451.25 647.0,451.83 649.0,452.34 651.0,452.79 653.0,453.18 655.0,453.48 657.0,453.70 659.0,453.85 661.0,453.90 663.0,453.87 665.0,453.75 667.0,453.54 669.0,453.26 671.0,452.90 673.0,452.46 675.0,451.96 677.0,451.40 679.0,450.79 681.0,450.14 683.0,449.46 685.0,448.76 687.0,448.04 689.0,447.33 691.0,446.62 693.0,445.94 695.0,445.29 697.0,444.67 699.0,444.11 701.0,443.60 703.0,443.15 705.0,442.78 707.0,442.49 709.0,442.27 711.0,442.14 713.0,442.10 715.0,442.14 717.0,442.27 719.0,442.49 721.0,442.78 723.0,443.15 725.0,443.60 727.0,444.11 729.0,444.67 731.0,445.29 733.0,445.94 735.0,446.62 737.0,447.33 739.0,448.04 741.0,448.76 743.0,449.46 745.0,450.14 747.0,450.79 749.0,451.40 751.0,451.96 753.0,452.46 755.0,452.90 757.0,453.26 759.0,453.54 761.0,453.75 763.0,453.87 765.0,453.90 767.0,453.85 769.0,453.70 771.0,453.48 773.0,453.18 775.0,452.79 777.0,452.34 779.0,451.83 781.0,451.25 783.0,450.63 785.0,449.98 787.0,449.29 789.0,448.58 791.0,447.87 793.0,447.15 795.0,446.45 797.0,445.77 799.0,445.13 801.0,444.52 803.0,443.97 805.0,443.48 807.0,443.05 809.0,442.70 811.0,442.43 813.0,442.23 815.0,442.12 817.0,442.10 819.0,442.17 821.0,442.32 823.0,442.55 825.0,442.87 827.0,443.26 829.0,443.72 831.0,444.24 833.0,444.82 835.0,445.45 837.0,446.11 839.0,446.80 841.0,447.51 843.0,448.22 845.0,448.94 847.0,449.63 849.0,450.31 851.0,450.95 853.0,451.55 855.0,452.09 857.0,452.58 859.0,452.99 861.0,453.34 863.0,453.60 865.0,453.79 867.0,453.88 869.0,453.89 871.0,453.82 873.0,453.66 875.0,453.41 877.0,453.09 879.0,452.69 881.0,452.22 883.0,451.69 885.0,451.10 887.0,450.47 889.0,449.81 891.0,449.11 893.0,448.40 895.0,447.69 897.0,446.98 899.0,446.28 901.0,445.61 903.0,444.97 905.0,444.38 907.0,443.84 909.0,443.37 911.0,442.96 913.0,442.62 915.0,442.37 917.0,442.20 919.0,442.11 921.0,442.11 923.0,442.20 925.0,442.37 927.0,442.62 929.0,442.96 931.0,443.37 933.0,443.84 935.0,444.38 937.0,444.97 939.0,445.61 941.0,446.28 943.0,446.98 945.0,447.69 947.0,448.40 949.0,449.11 951.0,449.81 953.0,450.47 955.0,451.10 957.0,451.69 959.0,452.22 961.0,452.69 963.0,453.09 965.0,453.41 967.0,453.66 969.0,453.82 971.0,453.89 973.0,453.88 975.0,453.79 977.0,453.60 979.0,453.34 981.0,452.99 983.0,452.58 985.0,452.09 987.0,451.55 989.0,450.95 991.0,450.31 993.0,449.63 995.0,448.94 997.0,448.22 999.0,447.51 1001.0,446.80 1003.0,446.11 1005.0,445.45 1007.0,444.82 1009.0,444.24 1011.0,443.72 1013.0,443.26 1015.0,442.87 1017.0,442.55 1019.0,442.32 1021.0,442.17 1023.0,442.10 1025.0,442.12 1027.0,442.23 1029.0,442.43 1031.0,442.70 1033.0,443.05 1035.0,443.48 1037.0,443.97 1039.0,444.52 1041.0,445.13 1043.0,445.77 1045.0,446.45 1047.0,447.15 1049.0,447.87 1051.0,448.58 1053.0,449.29 1055.0,449.98 1057.0,450.63 1059.0,451.25 1061.0,451.83 1063.0,452.34 1065.0,452.79 1067.0,453.18 1069.0,453.48 1071.0,453.70 1073.0,453.85 1075.0,453.90 1077.0,453.87 1079.0,453.75 1081.0,453.54 1083.0,453.26 1085.0,452.90 1087.0,452.46 1089.0,451.96 1091.0,451.40 1093.0,450.79 1095.0,450.14 1097.0,449.46 1099.0,448.76 1101.0,448.04 1103.0,447.33 1105.0,446.62 1107.0,445.94 1109.0,445.29 1111.0,444.67 1113.0,444.11 1115.0,443.60 1117.0,443.15 1119.0,442.78 1121.0,442.49 1123.0,442.27 1125.0,442.14 1127.0,442.10 1129.0,442.14 1131.0,442.27 1133.0,442.49 1135.0,442.78 1137.0,443.15 1139.0,443.60 1141.0,444.11 1143.0,444.67 1145.0,445.29 1147.0,445.94 1149.0,446.62 1151.0,447.33 1153.0,448.04 1155.0,448.76 1157.0,449.46 1159.0,450.14 1161.0,450.79 1163.0,451.40 1165.0,451.96 1167.0,452.46 1169.0,452.90 1171.0,453.26 1173.0,453.54 1175.0,453.75 1177.0,453.87 1179.0,453.90 1181.0,453.85 1183.0,453.70 1185.0,453.48 1187.0,453.18 1189.0,452.79 1191.0,452.34 1193.0,451.83 1195.0,451.25 1197.0,450.63 1199.0,449.98 1201.0,449.29 1203.0,448.58 1205.0,447.87 1207.0,447.15 1209.0,446.45 1211.0,445.77 1213.0,445.13 1215.0,444.52 1217.0,443.97 1219.0,443.48 1221.0,443.05 1223.0,442.70 1225.0,442.43 1227.0,442.23 1229.0,442.12 1231.0,442.10 1233.0,442.17 1235.0,442.32 1237.0,442.55 1239.0,442.87 1241.0,443.26 1243.0,443.72 1245.0,444.24 1247.0,444.82 1249.0,445.45 1251.0,446.11 1253.0,446.80 1255.0,447.51 1257.0,448.22 1259.0,448.94 1261.0,449.63 1263.0,450.31 1265.0,450.95 1267.0,451.55 1269.0,452.09 1271.0,452.58 1273.0,452.99 1275.0,453.34 1277.0,453.60 1279.0,453.79 1281.0,453.88 1283.0,453.89 1285.0,453.82 1287.0,453.66 1289.0,453.41 1291.0,453.09 1293.0,452.69 1295.0,452.22 1297.0,451.69 1299.0,451.10 1301.0,450.47 1303.0,449.81 1305.0,449.11 1307.0,448.40 1309.0,447.69 1311.0,446.98 1313.0,446.28 1315.0,445.61 1317.0,444.97 1319.0,444.38 1321.0,443.84 1323.0,443.37 1325.0,442.96 1327.0,442.62 1329.0,442.37 1331.0,442.20 1333.0,442.11 1335.0,442.11 1337.0,442.20 1339.0,442.37 1341.0,442.62 1343.0,442.96 1345.0,443.37 1347.0,443.84 1349.0,444.38 1351.0,444.97 1353.0,445.61 1355.0,446.28 1357.0,446.98 1359.0,447.69 1361.0,448.40 1363.0,449.11 1365.0,449.81 1367.0,450.47 1369.0,451.10 1371.0,451.69 1373.0,452.22 1375.0,452.69 1377.0,453.09 1379.0,453.41 1381.0,453.66 1383.0,453.82 1385.0,453.89 1387.0,453.88" fill="none" stroke="#333" stroke-width="1.3"/>
<polyline points="299.0,465.10 301.0,465.14 303.0,465.27 305.0,465.49 307.0,465.78 309.0,466.15 311.0,466.60 313.0,467.11 315.0,467.67 317.0,468.29 319.0,468.94 321.0,469.62 323.0,470.33 325.0,471.04 327.0,471.76 329.0,472.46 331.0,473.14 333.0,473.79 335.0,474.40 337.0,474.96 339.0,475.46 341.0,475.90 343.0,476.26 345.0,476.54 347.0,476.75 349.0,476.87 351.0,476.90 353.0,476.85 355.0,476.70 357.0,476.48 359.0,476.18 361.0,475.79 363.0,475.34 365.0,474.83 367.0,474.25 369.0,473.63 371.0,472.98 373.0,472.29 375.0,471.58 377.0,470.87 379.0,470.15 381.0,469.45 383.0,468.77 385.0,468.13 387.0,467.52 389.0,466.97 391.0,466.48 393.0,466.05 395.0,465.70 397.0,465.43 399.0,465.23 401.0,465.12 403.0,465.10 405.0,465.17 407.0,465.32 409.0,465.55 411.0,465.87 413.0,466.26 415.0,466.72 417.0,467.24 419.0,467.82 421.0,468.45 423.0,469.11 425.0,469.80 427.0,470.51 429.0,471.22 431.0,471.94 433.0,472.63 435.0,473.31 437.0,473.95 439.0,474.55 441.0,475.09 443.0,475.58 445.0,475.99 447.0,476.34 449.0,476.60 451.0,476.79 453.0,476.88 455.0,476.89 457.0,476.82 459.0,476.66 461.0,476.41 463.0,476.09 465.0,475.69 467.0,475.22 469.0,474.69 471.0,474.10 473.0,473.47 475.0,472.81 477.0,472.11 479.0,471.40 481.0,470.69 483.0,469.98 485.0,469.28 487.0,468.61 489.0,467.97 491.0,467.38 493.0,466.84 495.0,466.37 497.0,465.96 499.0,465.62 501.0,465.37 503.0,465.20 505.0,465.11 507.0,465.11 509.0,465.20 511.0,465.37 513.0,465.62 515.0,465.96 517.0,466.37 519.0,466.84 521.0,467.38 523.0,467.97 525.0,468.61 527.0,469.28 529.0,469.98 531.0,470.69 533.0,471.40 535.0,472.11 537.0,472.81 539.0,473.47 541.0,474.10 543.0,474.69 545.0,475.22 547.0,475.69 549.0,476.09 551.0,476.41 553.0,476.66 555.0,476.82 557.0,476.89 559.0,476.88 561.0,476.79 563.0,476.60 565.0,476.34 567.0,475.99 569.0,475.58 571.0,475.09 573.0,474.55 575.0,473.95 577.0,473.31 579.0,472.63 581.0,471.94 583.0,471.22 585.0,470.51 587.0,469.80 589.0,469.11 591.0,468.45 593.0,467.82 595.0,467.24 597.0,466.72 599.0,466.26 601.0,465.87 603.0,465.55 605.0,465.32 607.0,465.17 609.0,465.10 611.0,465.12 613.0,465.23 615.0,465.43 617.0,465.70 619.0,466.05 621.0,466.48 623.0,466.97 625.0,467.52 627.0,468.13 629.0,468.77 631.0,469.45 633.0,470.15 635.0,470.87 637.0,471.58 639.0,472.29 641.0,472.98 643.0,473.63 645.0,474.25 647.0,474.83 649.0,475.34 651.0,475.79 653.0,476.18 655.0,476.48 657.0,476.70 659.0,476.85 661.0,476.90 663.0,476.87 665.0,476.75 667.0,476.54 669.0,476.26 671.0,475.90 673.0,475.46 675.0,474.96 677.0,474.40 679.0,473.79 681.0,473.14 683.0,472.46 685.0,471.76 687.0,471.04 689.0,470.33 691.0,469.62 693.0,468.94 695.0,468.29 697.0,467.67 699.0,467.11 701.0,466.60 703.0,466.15 705.0,465.78 707.0,465.49 709.0,465.27 711.0,465.14 713.0,465.10 715.0,465.14 717.0,465.27 719.0,465.49 721.0,465.78 723.0,466.15 725.0,466.60 727.0,467.11 729.0,467.67 731.0,468.29 733.0,468.94 735.0,469.62 737.0,470.33 739.0,471.04 741.0,471.76 743.0,472.46 745.0,473.14 747.0,473.79 749.0,474.40 751.0,474.96 753.0,475.46 755.0,475.90 757.0,476.26 759.0,476.54 761.0,476.75 763.0,476.87 765.0,476.90 767.0,476.85 769.0,476.70 771.0,476.48 773.0,476.18 775.0,475.79 777.0,475.34 779.0,474.83 781.0,474.25 783.0,473.63 785.0,472.98 787.0,472.29 789.0,471.58 791.0,470.87 793.0,470.15 795.0,469.45 797.0,468.77 799.0,468.13 801.0,467.52 803.0,466.97 805.0,466.48 807.0,466.05 809.0,465.70 811.0,465.43 813.0,465.23 815.0,465.12 817.0,465.10 819.0,465.17 821.0,465.32 823.0,465.55 825.0,465.87 827.0,466.26 829.0,466.72 831.0,467.24 833.0,467.82 835.0,468.45 837.0,469.11 839.0,469.80 841.0,470.51 843.0,471.22 845.0,471.94 847.0,472.63 849.0,473.31 851.0,473.95 853.0,474.55 855.0,475.09 857.0,475.58 859.0,475.99 861.0,476.34 863.0,476.60 865.0,476.79 867.0,476.88 869.0,476.89 871.0,476.82 873.0,476.66 875.0,476.41 877.0,476.09 879.0,475.69 881.0,475.22 883.0,474.69 885.0,474.10 887.0,473.47 889.0,472.81 891.0,472.11 893.0,471.40 895.0,470.69 897.0,469.98 899.0,469.28 901.0,468.61 903.0,467.97 905.0,467.38 907.0,466.84 909.0,466.37 911.0,465.96 913.0,465.62 915.0,465.37 917.0,465.20 919.0,465.11 921.0,465.11 923.0,465.20 925.0,465.37 927.0,465.62 929.0,465.96 931.0,466.37 933.0,466.84 935.0,467.38 937.0,467.97 939.0,468.61 941.0,469.28 943.0,469.98 945.0,470.69 947.0,471.40 949.0,472.11 951.0,472.81 953.0,473.47 955.0,474.10 957.0,474.69 959.0,475.22 961.0,475.69 963.0,476.09 965.0,476.41 967.0,476.66 969.0,476.82 971.0,476.89 973.0,476.88 975.0,476.79 977.0,476.60 979.0,476.34 981.0,475.99 983.0,475.58 985.0,475.09 987.0,474.55 989.0,473.95 991.0,473.31 993.0,472.63 995.0,471.94 997.0,471.22 999.0,470.51 1001.0,469.80 1003.0,469.11 1005.0,468.45 1007.0,467.82 1009.0,467.24 1011.0,466.72 1013.0,466.26 1015.0,465.87 1017.0,465.55 1019.0,465.32 1021.0,465.17 1023.0,465.10 1025.0,465.12 1027.0,465.23 1029.0,465.43 1031.0,465.70 1033.0,466.05 1035.0,466.48 1037.0,466.97 1039.0,467.52 1041.0,468.13 1043.0,468.77 1045.0,469.45 1047.0,470.15 1049.0,470.87 1051.0,471.58 1053.0,472.29 1055.0,472.98 1057.0,473.63 1059.0,474.25 1061.0,474.83 1063.0,475.34 1065.0,475.79 1067.0,476.18 1069.0,476.48 1071.0,476.70 1073.0,476.85 1075.0,476.90 1077.0,476.87 1079.0,476.75 1081.0,476.54 1083.0,476.26 1085.0,475.90 1087.0,475.46 1089.0,474.96 1091.0,474.40 1093.0,473.79 1095.0,473.14 1097.0,472.46 1099.0,471.76 1101.0,471.04 1103.0,470.33 1105.0,469.62 1107.0,468.94 1109.0,468.29 1111.0,467.67 1113.0,467.11 1115.0,466.60 1117.0,466.15 1119.0,465.78 1121.0,465.49 1123.0,465.27 1125.0,465.14 1127.0,465.10 1129.0,465.14 1131.0,465.27 1133.0,465.49 1135.0,465.78 1137.0,466.15 1139.0,466.60 1141.0,467.11 1143.0,467.67 1145.0,468.29 1147.0,468.94 1149.0,469.62 1151.0,470.33 1153.0,471.04 1155.0,471.76 1157.0,472.46 1159.0,473.14 1161.0,473.79 1163.0,474.40 1165.0,474.96 1167.0,475.46 1169.0,475.90 1171.0,476.26 1173.0,476.54 1175.0,476.75 1177.0,476.87 1179.0,476.90 1181.0,476.85 1183.0,476.70 1185.0,476.48 1187.0,476.18 1189.0,475.79 1191.0,475.34 1193.0,474.83 1195.0,474.25 1197.0,473.63 1199.0,472.98 1201.0,472.29 1203.0,471.58 1205.0,470.87 1207.0,470.15 1209.0,469.45 1211.0,468.77 1213.0,468.13 1215.0,467.52 1217.0,466.97 1219.0,466.48 1221.0,466.05 1223.0,465.70 1225.0,465.43 1227.0,465.23 1229.0,465.12 1231.0,465.10 1233.0,465.17 1235.0,465.32 1237.0,465.55 1239.0,465.87 1241.0,466.26 1243.0,466.72 1245.0,467.24 1247.0,467.82 1249.0,468.45 1251.0,469.11 1253.0,469.80 1255.0,470.51 1257.0,471.22 1259.0,471.94 1261.0,472.63 1263.0,473.31 1265.0,473.95 1267.0,474.55 1269.0,475.09 1271.0,475.58 1273.0,475.99 1275.0,476.34 1277.0,476.60 1279.0,476.79 1281.0,476.88 1283.0,476.89 1285.0,476.82 1287.0,476.66 1289.0,476.41 1291.0,476.09 1293.0,475.69 1295.0,475.22 1297.0,474.69 1299.0,474.10 1301.0,473.47 1303.0,472.81 1305.0,472.11 1307.0,471.40 1309.0,470.69 1311.0,469.98 1313.0,469.28 1315.0,468.61 1317.0,467.97 1319.0,467.38 1321.0,466.84 1323.0,466.37 1325.0,465.96 1327.0,465.62 1329.0,465.37 1331.0,465.20 1333.0,465.11 1335.0,465.11 1337.0,465.20 1339.0,465.37 1341.0,465.62 1343.0,465.96 1345.0,466.37 1347.0,466.84 1349.0,467.38 1351.0,467.97 1353.0,468.61 1355.0,469.28 1357.0,469.98 1359.0,470.69 1361.0,471.40 1363.0,472.11 1365.0,472.81 1367.0,473.47 1369.0,474.10 1371.0,474.69 1373.0,475.22 1375.0,475.69 1377.0,476.09 1379.0,476.41 1381.0,476.66 1383.0,476.82 1385.0,476.89 1387.0,476.88" fill="none" stroke="#333" stroke-width="1.3"/>
</svg>
<div class="rpan"></div>
<div class="t bd" style="left:1409px;top:138px">マニュアル</div><div class="t lk" style="left:1423px;top:163px">CLOMO 使い方マニュアル</div><div class="t lk" style="left:1423px;top:185px">CLOMO MDMのはじめかた</div><div class="t lk" style="left:1423px;top:207px">サポートへのお問い合わせ方法</div><div class="t bd" style="left:1409px;top:241px">よくあるお問合せ</div><div class="t lk" style="left:1423px;top:266px"><span class="lo">i</span>OS デバイスに MDM コマンドが届かない場合の対</div><div class="t lk" style="left:1423px;top:285px">処法</div><div class="t lk" style="left:1423px;top:307px">MDM へのデバイス登録時に「<span class="lo">i</span>OS D<span class="lo">evice</span>」となる</div><div class="t lk" style="left:1423px;top:326px">場合の対処法</div><div class="t lk" style="left:1423px;top:348px">VPP アプリを手動でインストールする方法</div><div class="t lk" style="left:1437px;top:371px">VPP アプリのアップデート方法</div><div class="t bd" style="left:1409px;top:404px">利用規約など</div><div class="t lk" style="left:1423px;top:430px">CLOMO利用規約</div><div class="t lk" style="left:1423px;top:452px">CLOMO サポートポリシー</div><div class="t lk" style="left:1423px;top:475px">CLOMO SLA</div>
<div class="gbox"></div>
<svg style="position:absolute;left:780px;top:460px" width="170" height="140" viewBox="780 460 170 140">
<path d="M799.6 532 L840 505 L840 559 Z" fill="#fff" stroke="#fff" stroke-width="3" stroke-linejoin="round"/>
<circle cx="877.5" cy="532" r="53" fill="#fff"/>
<path d="M799.6 532 L840 507 L840 557 Z" fill="#84b52a"/>
<circle cx="877.5" cy="532" r="51" fill="#84b52a"/>
<text x="871.5" y="552" font-family="Liberation Sans" font-size="63" fill="#fff" stroke="#fff" stroke-width="1.3" text-anchor="middle">4</text>
</svg>
</body></html>
